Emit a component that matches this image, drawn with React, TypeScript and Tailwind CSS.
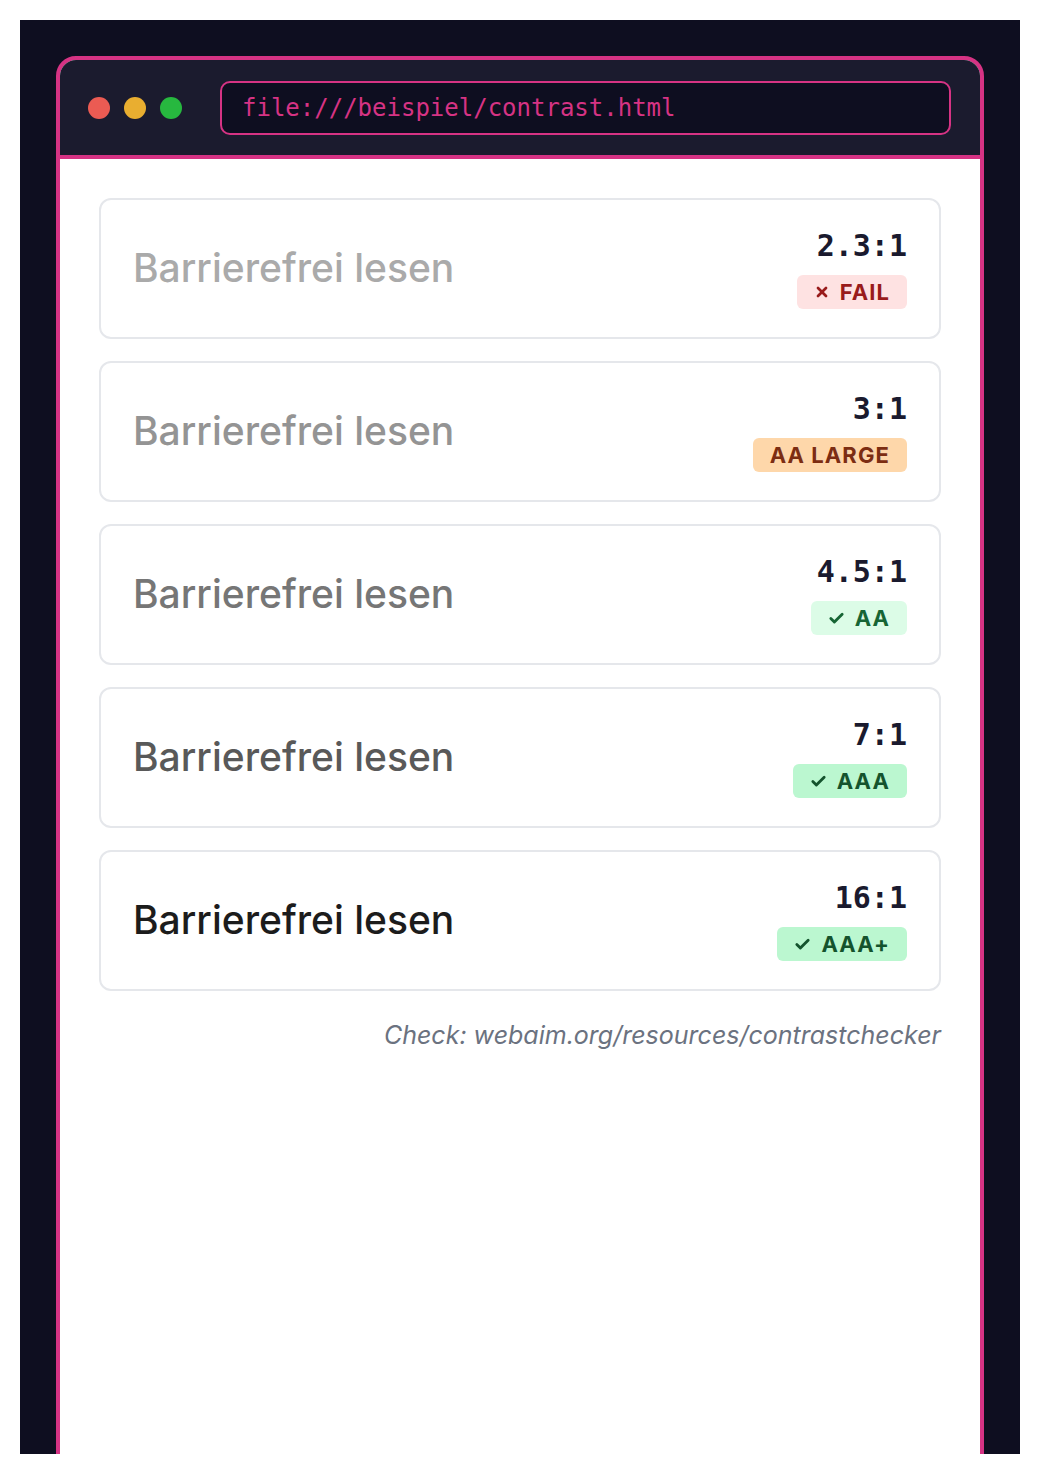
import { Check, X } from "lucide-react";

type Row = {
  color: string;
  ratio: string;
  label: string;
  badge: string;
  icon: "x" | "check" | null;
};

const rows: Row[] = [
  { color: "text-[#aaaaaa]", ratio: "2.3:1", label: "FAIL", badge: "bg-[#fee2e2] text-[#991b1b]", icon: "x" },
  { color: "text-[#949494]", ratio: "3:1", label: "AA LARGE", badge: "bg-[#fed7aa] text-[#7c2d12]", icon: null },
  { color: "text-[#767676]", ratio: "4.5:1", label: "AA", badge: "bg-[#dcfce7] text-[#166534]", icon: "check" },
  { color: "text-[#595959]", ratio: "7:1", label: "AAA", badge: "bg-[#bbf7d0] text-[#14532d]", icon: "check" },
  { color: "text-[#1c1c1c]", ratio: "16:1", label: "AAA+", badge: "bg-[#bbf7d0] text-[#14532d]", icon: "check" },
];

const ContrastCard = ({ color, ratio, label, badge, icon }: Row) => {
  return (
    <div className="h-[141px] border-2 border-[#e5e7eb] rounded-xl pl-[32px] pr-8 flex items-center justify-between">
      <p className={`text-[39px] font-medium ${color}`}>Barrierefrei lesen</p>
      <div className="flex flex-col items-end gap-[11px]">
        <p className="font-['DejaVu_Sans_Mono',monospace] font-bold text-[30px] leading-[36px] text-[#1a1a2e]">
          {ratio}
        </p>
        <span className={`h-[34px] px-[17px] rounded-md flex items-center gap-[10px] text-[22px] font-bold tracking-wider ${badge}`}>
          {icon === "x" && <X size={16} strokeWidth={4} />}
          {icon === "check" && <Check size={17} strokeWidth={4} />}
          {label}
        </span>
      </div>
    </div>
  );
};

export default function App() {
  return (
    <div className="bg-white p-5 font-['Inter',sans-serif]">
      <div className="h-[1434px] bg-[#0e0e20] px-9 pt-9 overflow-hidden">
        <div className="h-[1440px] border-4 border-[#d63384] rounded-t-[20px] bg-white flex flex-col">
          <div className="h-[99px] bg-[#1b1b2e] border-b-4 border-[#d63384] rounded-t-[16px] flex items-center pl-7 pr-[29px]">
            <div className="flex gap-[14px]">
              <span className="w-[22px] h-[22px] rounded-full bg-[#eb5b53]" />
              <span className="w-[22px] h-[22px] rounded-full bg-[#e9ae30]" />
              <span className="w-[22px] h-[22px] rounded-full bg-[#27b83f]" />
            </div>
            <div className="ml-[38px] flex-1 h-[54px] border-2 border-[#d63384] rounded-[10px] bg-[#0e0e20] flex items-center px-5">
              <p className="font-['DejaVu_Sans_Mono',monospace] text-[24px] text-[#d63384]">
                file:///beispiel/contrast.html
              </p>
            </div>
          </div>

          <div className="p-[39px] flex flex-col">
            <div className="flex flex-col gap-[22px]">
              {rows.map((r) => (
                <ContrastCard key={r.ratio} {...r} />
              ))}
            </div>
            <p className="mt-[26px] text-right italic text-[25px] text-[#6b7280]">
              Check: webaim.org/resources/contrastchecker
            </p>
          </div>
        </div>
      </div>
    </div>
  );
}
